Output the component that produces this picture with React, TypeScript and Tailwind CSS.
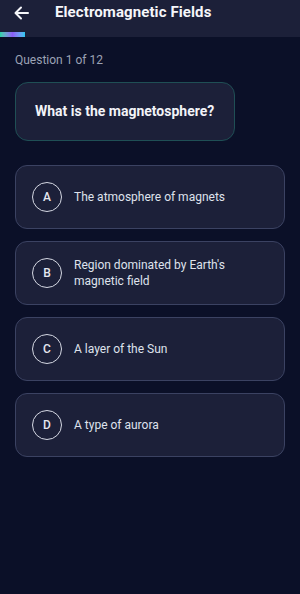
import React from "react";

const options = [
  { l: "A", t: "The atmosphere of magnets" },
  { l: "B", t: "Region dominated by Earth's magnetic field" },
  { l: "C", t: "A layer of the Sun" },
  { l: "D", t: "A type of aurora" },
];

export default function App() {
  return (
    <div
      className="w-[300px] h-[594px] bg-[#0b1028] overflow-hidden"
      style={{ fontFamily: "Roboto, 'Liberation Sans', sans-serif" }}
    >
      <div className="bg-[#1c2039] h-[37px] flex flex-col">
        <div className="h-[25px] flex items-center pl-[14px]">
          <svg width="15" height="14" viewBox="0 0 15 14" fill="none" stroke="#f5f6fa" strokeWidth="2" strokeLinecap="round" strokeLinejoin="round">
            <path d="M14 7H2" />
            <path d="M7 1.5L1.5 7L7 12.5" />
          </svg>
          <span className="ml-[26px] text-[15px] font-bold text-[#f5f6fa] tracking-[0.1px]">Electromagnetic Fields</span>
        </div>
        <div className="mt-auto h-[5px] w-[25px] bg-gradient-to-r from-[#22d3a6] via-[#8b5cf6] to-[#22c8f0]" />
      </div>

      <div className="px-[15px]">
        <div className="mt-[16px] text-[12px] text-[#9ca2b5] leading-[14px]">Question 1 of 12</div>

        <div className="mt-[15px] w-[220px] h-[59px] rounded-[13px] border border-[#1f4f55] bg-[#1c2039] flex items-center px-[19px]">
          <span className="text-[14px] font-bold text-[#f2f3f8]">What is the magnetosphere?</span>
        </div>

        <div className="mt-[24px] flex flex-col gap-[12px]">
          {options.map((o) => (
            <div
              key={o.l}
              className="h-[64px] rounded-[12px] border border-[#3b4262] bg-[#1c2039] flex items-center pl-[16px] pr-[12px]"
            >
              <div className="w-[30px] h-[30px] shrink-0 rounded-full border-[1.5px] border-[#d5d8e3] flex items-center justify-center text-[12px] font-medium text-[#e5e7ef]">
                {o.l}
              </div>
              <span className="ml-[12px] text-[12px] leading-[16px] text-[#dfe2ec] w-[190px]">{o.t}</span>
            </div>
          ))}
        </div>
      </div>
    </div>
  );
}
